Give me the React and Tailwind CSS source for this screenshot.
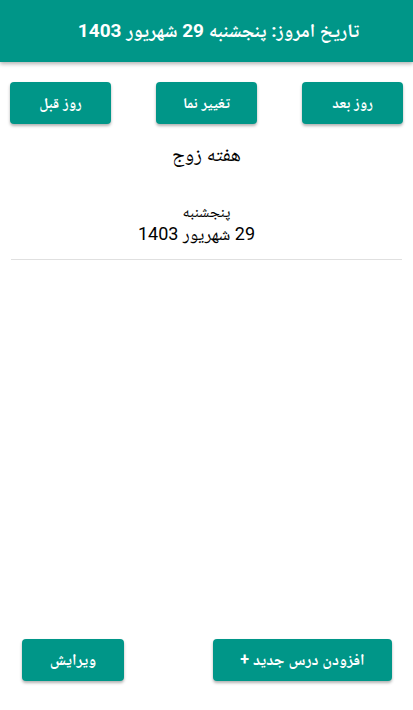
export default function App() {
  const btn = 'w-[101px] h-[42px] bg-[#009688] text-white font-bold text-[15px] rounded-[4px] shadow-[0_2px_3px_rgba(0,0,0,0.3)]';
  const btn2 = 'h-[42px] bg-[#009688] text-white font-bold text-[16px] rounded-[4px] shadow-[0_2px_3px_rgba(0,0,0,0.3)]';
  return (
    <div dir="rtl" className="w-[413px] h-[710px] bg-white flex flex-col overflow-hidden font-['Roboto','Noto_Naskh_Arabic',sans-serif]">
      <div className="h-[62px] bg-[#009688] flex items-center justify-center pl-6 shadow-[0_2px_4px_rgba(0,0,0,0.3)] z-10">
        <h1 className="text-white font-bold text-[19px]">تاریخ امروز: پنجشنبه 29 شهریور 1403</h1>
      </div>
      <div className="flex justify-between px-[10px] pt-5">
        {['روز بعد', 'تغییر نما', 'روز قبل'].map((t) => (
          <button key={t} className={btn}>
            {t}
          </button>
        ))}
      </div>
      <div className="text-center text-[20px] text-black mt-[15px]">هفته زوج</div>
      <div className="text-center mt-[33px] flex flex-col items-center">
        <div className="text-[16px] text-black leading-[20px]">پنجشنبه</div>
        <div className="text-[18px] text-black leading-[22px] mt-px pr-5">29 شهریور 1403</div>
      </div>
      <div className="mx-[11px] mt-[14px] h-px bg-[#e0e0e0]" />
      <div className="flex-1" />
      <div className="flex justify-between pr-[21px] pl-[22px] pb-[29px]">
        <button className={`${btn2} w-[179px]`}>افزودن درس جدید +</button>
        <button className={`${btn2} w-[102px]`}>ویرایش</button>
      </div>
    </div>
  );
}
